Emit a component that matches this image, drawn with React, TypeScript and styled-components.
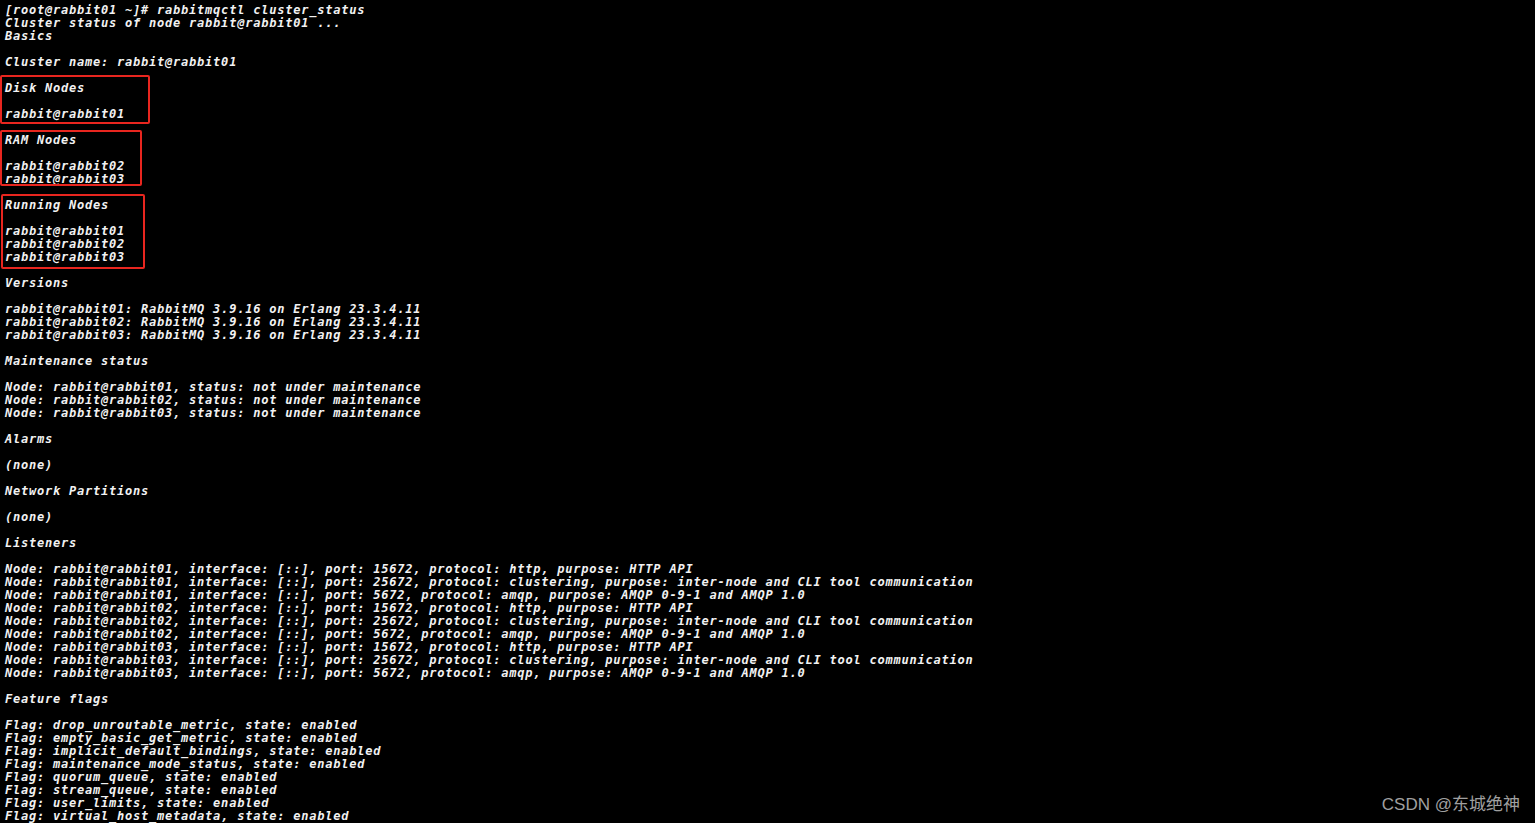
import React from "react";
import styled, { createGlobalStyle } from "styled-components";

const Global = createGlobalStyle`
  html, body { margin: 0; padding: 0; background: #000; }
  body { width: 1535px; height: 823px; overflow: hidden; }
`;

const Screen = styled.div`
  position: relative;
  width: 1535px;
  height: 823px;
  background: #000;
  overflow: hidden;
`;

const Terminal = styled.div`
  display: flex;
  flex-direction: column;
  padding: 4px 0 0 5px;
  font-family: "DejaVu Sans Mono", "Liberation Mono", monospace;
  font-weight: bold;
  font-style: italic;
  font-size: 12px;
  letter-spacing: 0.78px;
  color: #f2f2f2;
`;

const Line = styled.div`
  height: 13px;
  line-height: 13px;
  white-space: pre;
`;

const Mark = styled.div<{ $l: number; $t: number; $w: number; $h: number }>`
  position: absolute;
  left: ${(p) => p.$l}px;
  top: ${(p) => p.$t}px;
  width: ${(p) => p.$w}px;
  height: ${(p) => p.$h}px;
  border: 2px solid #e8261f;
  border-radius: 2px;
  box-sizing: border-box;
`;

const Watermark = styled.div`
  position: absolute;
  right: 15px;
  bottom: 8px;
  font-family: "Liberation Sans", "Noto Sans CJK SC", sans-serif;
  font-size: 17px;
  line-height: 20px;
  color: #a0a0a0;
`;

const lines = [
  "[root@rabbit01 ~]# rabbitmqctl cluster_status",
  "Cluster status of node rabbit@rabbit01 ...",
  "Basics",
  "",
  "Cluster name: rabbit@rabbit01",
  "",
  "Disk Nodes",
  "",
  "rabbit@rabbit01",
  "",
  "RAM Nodes",
  "",
  "rabbit@rabbit02",
  "rabbit@rabbit03",
  "",
  "Running Nodes",
  "",
  "rabbit@rabbit01",
  "rabbit@rabbit02",
  "rabbit@rabbit03",
  "",
  "Versions",
  "",
  "rabbit@rabbit01: RabbitMQ 3.9.16 on Erlang 23.3.4.11",
  "rabbit@rabbit02: RabbitMQ 3.9.16 on Erlang 23.3.4.11",
  "rabbit@rabbit03: RabbitMQ 3.9.16 on Erlang 23.3.4.11",
  "",
  "Maintenance status",
  "",
  "Node: rabbit@rabbit01, status: not under maintenance",
  "Node: rabbit@rabbit02, status: not under maintenance",
  "Node: rabbit@rabbit03, status: not under maintenance",
  "",
  "Alarms",
  "",
  "(none)",
  "",
  "Network Partitions",
  "",
  "(none)",
  "",
  "Listeners",
  "",
  "Node: rabbit@rabbit01, interface: [::], port: 15672, protocol: http, purpose: HTTP API",
  "Node: rabbit@rabbit01, interface: [::], port: 25672, protocol: clustering, purpose: inter-node and CLI tool communication",
  "Node: rabbit@rabbit01, interface: [::], port: 5672, protocol: amqp, purpose: AMQP 0-9-1 and AMQP 1.0",
  "Node: rabbit@rabbit02, interface: [::], port: 15672, protocol: http, purpose: HTTP API",
  "Node: rabbit@rabbit02, interface: [::], port: 25672, protocol: clustering, purpose: inter-node and CLI tool communication",
  "Node: rabbit@rabbit02, interface: [::], port: 5672, protocol: amqp, purpose: AMQP 0-9-1 and AMQP 1.0",
  "Node: rabbit@rabbit03, interface: [::], port: 15672, protocol: http, purpose: HTTP API",
  "Node: rabbit@rabbit03, interface: [::], port: 25672, protocol: clustering, purpose: inter-node and CLI tool communication",
  "Node: rabbit@rabbit03, interface: [::], port: 5672, protocol: amqp, purpose: AMQP 0-9-1 and AMQP 1.0",
  "",
  "Feature flags",
  "",
  "Flag: drop_unroutable_metric, state: enabled",
  "Flag: empty_basic_get_metric, state: enabled",
  "Flag: implicit_default_bindings, state: enabled",
  "Flag: maintenance_mode_status, state: enabled",
  "Flag: quorum_queue, state: enabled",
  "Flag: stream_queue, state: enabled",
  "Flag: user_limits, state: enabled",
  "Flag: virtual_host_metadata, state: enabled",
];

export default function App() {
  return (
    <Screen>
      <Global />
      <Terminal>
        {lines.map((l, i) => (
          <Line key={i}>{l}</Line>
        ))}
      </Terminal>
      <Mark $l={0} $t={75} $w={150} $h={49} />
      <Mark $l={0} $t={130} $w={142} $h={56} />
      <Mark $l={1} $t={194} $w={144} $h={75} />
      <Watermark>CSDN @东城绝神</Watermark>
    </Screen>
  );
}
